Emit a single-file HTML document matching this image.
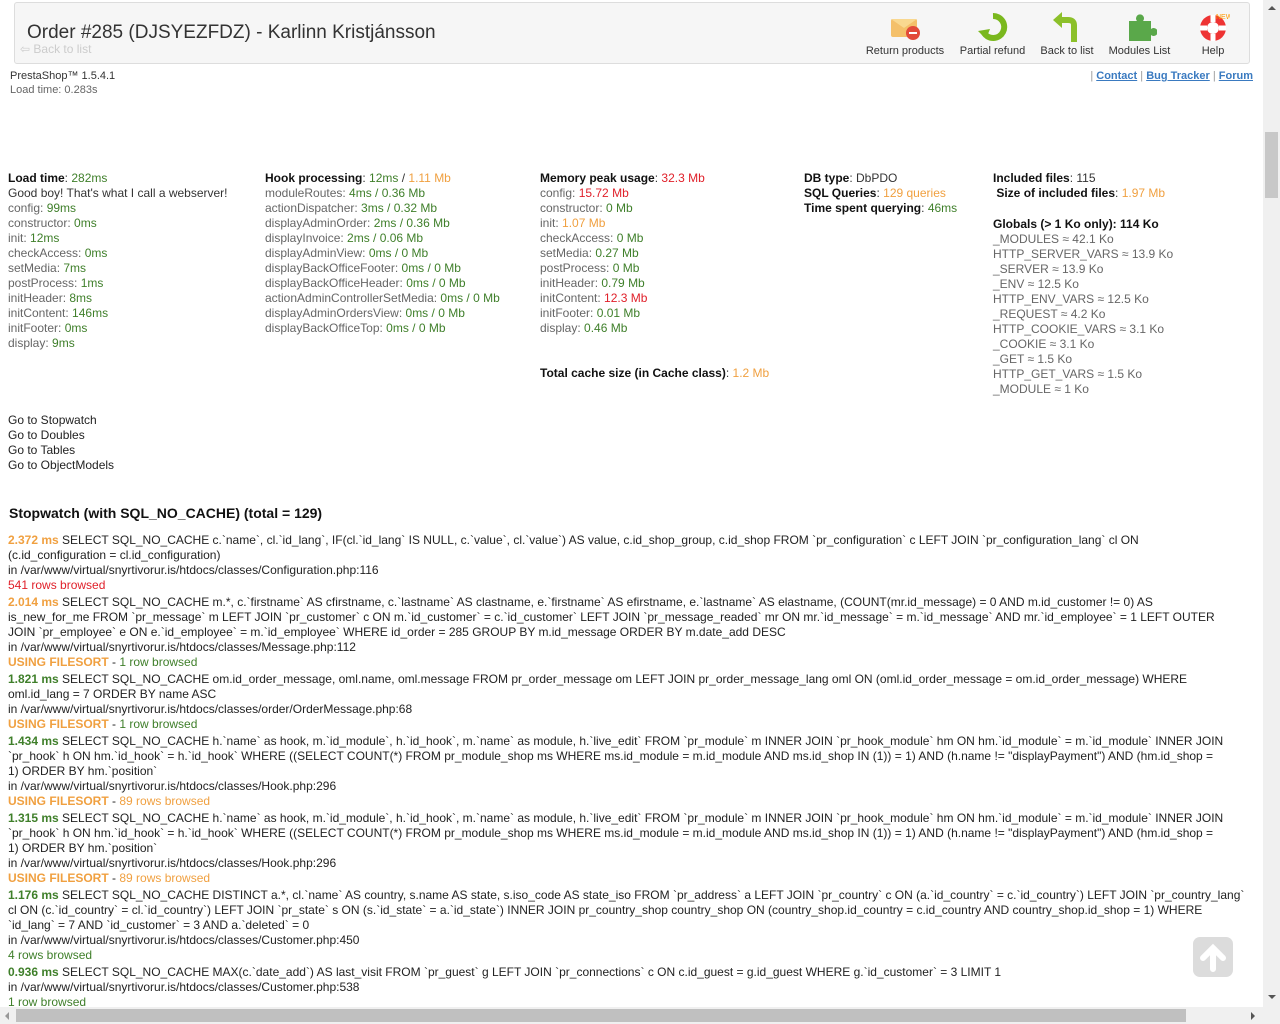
<!DOCTYPE html>
<html><head><meta charset="utf-8"><style>
body{margin:0;width:1280px;height:1024px;overflow:hidden;background:#fff;font-family:"Liberation Sans",Arial,sans-serif;font-size:12px;color:#333;position:relative}
.hdr{position:absolute;left:14px;top:2px;width:1234px;height:60px;background:#f6f6f6;border:1px solid #ddd;border-radius:3px}
.hdr h1{position:absolute;left:12px;top:19px;margin:0;font-weight:normal;font-size:19px;color:#333}
.back{position:absolute;left:5px;top:39px;color:#ccc;font-size:12px}
.tb{position:absolute;top:8px;text-align:center;font-size:11px;color:#333}
.tb .ic{width:34px;height:32px;margin:0 auto 2px}
.a{position:absolute}
.g{color:#3f7f2a}.o{color:#f0a040}.r{color:#e0202a}
.l{color:#666}
b{color:#111}
.col div{line-height:15px;white-space:nowrap}
.q{position:absolute;left:8px;top:533px;width:1250px;color:#222}
.q div{line-height:15px;margin-bottom:2px}
.q .t{font-weight:bold}
.vs{position:absolute;right:0;top:0;width:17px;height:1007px;background:#f0f0f0}
.hs{position:absolute;left:0;bottom:0;width:1263px;height:17px;background:#f0f0f0}
</style></head><body>
<div class="hdr">
<h1>Order #285 (DJSYEZFDZ) - Karlinn Kristjánsson</h1>
<div class="back">⇦ Back to list</div>
<div class="tb" style="left:850px;width:80px"><div class="ic"><svg width="34" height="32"><rect x="3" y="8" width="26" height="18" rx="2" fill="#f4c06a"/><path d="M3 8 L16 17 L29 8" fill="#f9d890"/><circle cx="25" cy="22" r="7" fill="#e24a3a"/><rect x="21" y="21" width="8" height="2" fill="#fff"/></svg></div>Return products</div>
<div class="tb" style="left:940px;width:75px"><div class="ic"><svg width="34" height="32"><path d="M17 5a11 11 0 1 1 -9 17" stroke="#7ab81e" stroke-width="6" fill="none"/><path d="M2 20 L10 28 L14 18 Z" fill="#7ab81e"/></svg></div>Partial refund</div>
<div class="tb" style="left:1022px;width:60px"><div class="ic"><svg width="34" height="32"><path d="M24 31 V14 Q24 9 18 9 H10" stroke="#8cc02a" stroke-width="6" fill="none"/><path d="M3 9 L12 1 V17 Z" fill="#8cc02a"/></svg></div>Back to list</div>
<div class="tb" style="left:1092px;width:65px"><div class="ic"><svg width="34" height="32"><path d="M6 10h8a4 4 0 1 1 6 0h8v8a4 4 0 1 1 0 6v6H6z" fill="#5aa84a"/></svg></div>Modules List</div>
<div class="tb" style="left:1178px;width:40px"><div class="ic"><svg width="34" height="32"><circle cx="17" cy="17" r="13" fill="#e33"/><circle cx="17" cy="17" r="6" fill="#fff"/><path d="M17 4v7M17 23v7M4 17h7M23 17h7" stroke="#fff" stroke-width="5"/><text x="20" y="8" font-size="7" fill="#f90" font-family="Liberation Sans">NEW</text></svg></div>Help</div>
</div>
<div class="a" style="left:10px;top:69px;font-size:11px;color:#333;line-height:14px">PrestaShop™ 1.5.4.1<br><span style="color:#666">Load time: 0.283s</span></div>
<div class="a" style="right:27px;top:70px;font-size:11px;color:#999"> | <a style="color:#3a7ac0;font-weight:bold;text-decoration:underline">Contact</a> | <a style="color:#3a7ac0;font-weight:bold;text-decoration:underline">Bug Tracker</a> | <a style="color:#3a7ac0;font-weight:bold;text-decoration:underline">Forum</a></div>

<div class="a col" style="left:8px;top:171px">
<div><b>Load time</b>: <span class="g">282ms</span></div>
<div>Good boy! That's what I call a webserver!</div>
<div class="l">config: <span class="g">99ms</span></div>
<div class="l">constructor: <span class="g">0ms</span></div>
<div class="l">init: <span class="g">12ms</span></div>
<div class="l">checkAccess: <span class="g">0ms</span></div>
<div class="l">setMedia: <span class="g">7ms</span></div>
<div class="l">postProcess: <span class="g">1ms</span></div>
<div class="l">initHeader: <span class="g">8ms</span></div>
<div class="l">initContent: <span class="g">146ms</span></div>
<div class="l">initFooter: <span class="g">0ms</span></div>
<div class="l">display: <span class="g">9ms</span></div>
</div>
<div class="a col" style="left:265px;top:171px">
<div><b>Hook processing</b>: <span class="g">12ms</span> / <span class="o">1.11 Mb</span></div>
<div class="l">moduleRoutes: <span class="g">4ms / 0.36 Mb</span></div>
<div class="l">actionDispatcher: <span class="g">3ms / 0.32 Mb</span></div>
<div class="l">displayAdminOrder: <span class="g">2ms / 0.36 Mb</span></div>
<div class="l">displayInvoice: <span class="g">2ms / 0.06 Mb</span></div>
<div class="l">displayAdminView: <span class="g">0ms / 0 Mb</span></div>
<div class="l">displayBackOfficeFooter: <span class="g">0ms / 0 Mb</span></div>
<div class="l">displayBackOfficeHeader: <span class="g">0ms / 0 Mb</span></div>
<div class="l">actionAdminControllerSetMedia: <span class="g">0ms / 0 Mb</span></div>
<div class="l">displayAdminOrdersView: <span class="g">0ms / 0 Mb</span></div>
<div class="l">displayBackOfficeTop: <span class="g">0ms / 0 Mb</span></div>
</div>
<div class="a col" style="left:540px;top:171px">
<div><b>Memory peak usage</b>: <span class="r">32.3 Mb</span></div>
<div class="l">config: <span class="r">15.72 Mb</span></div>
<div class="l">constructor: <span class="g">0 Mb</span></div>
<div class="l">init: <span class="o">1.07 Mb</span></div>
<div class="l">checkAccess: <span class="g">0 Mb</span></div>
<div class="l">setMedia: <span class="g">0.27 Mb</span></div>
<div class="l">postProcess: <span class="g">0 Mb</span></div>
<div class="l">initHeader: <span class="g">0.79 Mb</span></div>
<div class="l">initContent: <span class="r">12.3 Mb</span></div>
<div class="l">initFooter: <span class="g">0.01 Mb</span></div>
<div class="l">display: <span class="g">0.46 Mb</span></div>
<div>&nbsp;</div><div>&nbsp;</div>
<div><b>Total cache size (in Cache class)</b>: <span class="o">1.2 Mb</span></div>
</div>
<div class="a col" style="left:804px;top:171px">
<div><b>DB type</b>: DbPDO</div>
<div><b>SQL Queries</b>: <span class="o">129 queries</span></div>
<div><b>Time spent querying</b>: <span class="g">46ms</span></div>
</div>
<div class="a col" style="left:993px;top:171px">
<div><b>Included files</b>: 115</div>
<div>&nbsp;<b>Size of included files</b>: <span class="o">1.97 Mb</span></div>
<div style="height:16px"></div>
<div><b>Globals (&gt; 1 Ko only): 114 Ko</b></div>
<div class="l">_MODULES ≈ 42.1 Ko</div>
<div class="l">HTTP_SERVER_VARS ≈ 13.9 Ko</div>
<div class="l">_SERVER ≈ 13.9 Ko</div>
<div class="l">_ENV ≈ 12.5 Ko</div>
<div class="l">HTTP_ENV_VARS ≈ 12.5 Ko</div>
<div class="l">_REQUEST ≈ 4.2 Ko</div>
<div class="l">HTTP_COOKIE_VARS ≈ 3.1 Ko</div>
<div class="l">_COOKIE ≈ 3.1 Ko</div>
<div class="l">_GET ≈ 1.5 Ko</div>
<div class="l">HTTP_GET_VARS ≈ 1.5 Ko</div>
<div class="l">_MODULE ≈ 1 Ko</div>
</div>
<div class="a col" style="left:8px;top:413px;color:#222">
<div>Go to Stopwatch</div><div>Go to Doubles</div><div>Go to Tables</div><div>Go to ObjectModels</div>
</div>
<div class="a" style="left:9px;top:505px;font-size:14px;font-weight:bold;color:#111">Stopwatch (with SQL_NO_CACHE) (total = 129)</div>

<div class="q">
<div><span class="t o">2.372 ms</span> SELECT SQL_NO_CACHE c.`name`, cl.`id_lang`, IF(cl.`id_lang` IS NULL, c.`value`, cl.`value`) AS value, c.id_shop_group, c.id_shop FROM `pr_configuration` c LEFT JOIN `pr_configuration_lang` cl ON<br>(c.id_configuration = cl.id_configuration)<br>in /var/www/virtual/snyrtivorur.is/htdocs/classes/Configuration.php:116<br><span class="r">541 rows browsed</span></div>
<div><span class="t o">2.014 ms</span> SELECT SQL_NO_CACHE m.*, c.`firstname` AS cfirstname, c.`lastname` AS clastname, e.`firstname` AS efirstname, e.`lastname` AS elastname, (COUNT(mr.id_message) = 0 AND m.id_customer != 0) AS<br>is_new_for_me FROM `pr_message` m LEFT JOIN `pr_customer` c ON m.`id_customer` = c.`id_customer` LEFT JOIN `pr_message_readed` mr ON mr.`id_message` = m.`id_message` AND mr.`id_employee` = 1 LEFT OUTER<br>JOIN `pr_employee` e ON e.`id_employee` = m.`id_employee` WHERE id_order = 285 GROUP BY m.id_message ORDER BY m.date_add DESC<br>in /var/www/virtual/snyrtivorur.is/htdocs/classes/Message.php:112<br><span class="t o">USING FILESORT</span> - <span class="g">1 row browsed</span></div>
<div><span class="t g">1.821 ms</span> SELECT SQL_NO_CACHE om.id_order_message, oml.name, oml.message FROM pr_order_message om LEFT JOIN pr_order_message_lang oml ON (oml.id_order_message = om.id_order_message) WHERE<br>oml.id_lang = 7 ORDER BY name ASC<br>in /var/www/virtual/snyrtivorur.is/htdocs/classes/order/OrderMessage.php:68<br><span class="t o">USING FILESORT</span> - <span class="g">1 row browsed</span></div>
<div><span class="t g">1.434 ms</span> SELECT SQL_NO_CACHE h.`name` as hook, m.`id_module`, h.`id_hook`, m.`name` as module, h.`live_edit` FROM `pr_module` m INNER JOIN `pr_hook_module` hm ON hm.`id_module` = m.`id_module` INNER JOIN<br>`pr_hook` h ON hm.`id_hook` = h.`id_hook` WHERE ((SELECT COUNT(*) FROM pr_module_shop ms WHERE ms.id_module = m.id_module AND ms.id_shop IN (1)) = 1) AND (h.name != "displayPayment") AND (hm.id_shop =<br>1) ORDER BY hm.`position`<br>in /var/www/virtual/snyrtivorur.is/htdocs/classes/Hook.php:296<br><span class="t o">USING FILESORT</span> - <span class="o">89 rows browsed</span></div>
<div><span class="t g">1.315 ms</span> SELECT SQL_NO_CACHE h.`name` as hook, m.`id_module`, h.`id_hook`, m.`name` as module, h.`live_edit` FROM `pr_module` m INNER JOIN `pr_hook_module` hm ON hm.`id_module` = m.`id_module` INNER JOIN<br>`pr_hook` h ON hm.`id_hook` = h.`id_hook` WHERE ((SELECT COUNT(*) FROM pr_module_shop ms WHERE ms.id_module = m.id_module AND ms.id_shop IN (1)) = 1) AND (h.name != "displayPayment") AND (hm.id_shop =<br>1) ORDER BY hm.`position`<br>in /var/www/virtual/snyrtivorur.is/htdocs/classes/Hook.php:296<br><span class="t o">USING FILESORT</span> - <span class="o">89 rows browsed</span></div>
<div><span class="t g">1.176 ms</span> SELECT SQL_NO_CACHE DISTINCT a.*, cl.`name` AS country, s.name AS state, s.iso_code AS state_iso FROM `pr_address` a LEFT JOIN `pr_country` c ON (a.`id_country` = c.`id_country`) LEFT JOIN `pr_country_lang`<br>cl ON (c.`id_country` = cl.`id_country`) LEFT JOIN `pr_state` s ON (s.`id_state` = a.`id_state`) INNER JOIN pr_country_shop country_shop ON (country_shop.id_country = c.id_country AND country_shop.id_shop = 1) WHERE<br>`id_lang` = 7 AND `id_customer` = 3 AND a.`deleted` = 0<br>in /var/www/virtual/snyrtivorur.is/htdocs/classes/Customer.php:450<br><span class="g">4 rows browsed</span></div>
<div><span class="t g">0.936 ms</span> SELECT SQL_NO_CACHE MAX(c.`date_add`) AS last_visit FROM `pr_guest` g LEFT JOIN `pr_connections` c ON c.id_guest = g.id_guest WHERE g.`id_customer` = 3 LIMIT 1<br>in /var/www/virtual/snyrtivorur.is/htdocs/classes/Customer.php:538<br><span class="g">1 row browsed</span></div>
</div>
<div class="a" style="left:1193px;top:937px;width:40px;height:40px;border-radius:7px;background:#dcdcdc"><svg width="40" height="40"><path d="M20 32V12M10 21L20 11L30 21" stroke="#fff" stroke-width="6" fill="none" stroke-linecap="round"/></svg></div>
<div class="vs"><div style="position:absolute;left:2px;top:132px;width:13px;height:66px;background:#c8c8c8"></div><div style="position:absolute;left:5px;top:6px;border:4px solid transparent;border-bottom-color:#555;border-top:0"></div><div style="position:absolute;left:5px;top:995px;border:4px solid transparent;border-top-color:#555;border-bottom:0"></div></div>
<div class="hs"><div style="position:absolute;left:16px;top:2px;width:1170px;height:13px;background:#c0c0c0"></div><div style="position:absolute;left:1251px;top:5px;border:4px solid transparent;border-left-color:#555;border-right:0"></div><div style="position:absolute;left:5px;top:5px;border:4px solid transparent;border-right-color:#999;border-left:0"></div></div>
<div class="a" style="right:0;bottom:0;width:17px;height:17px;background:#f0f0f0"></div>
</body></html>
